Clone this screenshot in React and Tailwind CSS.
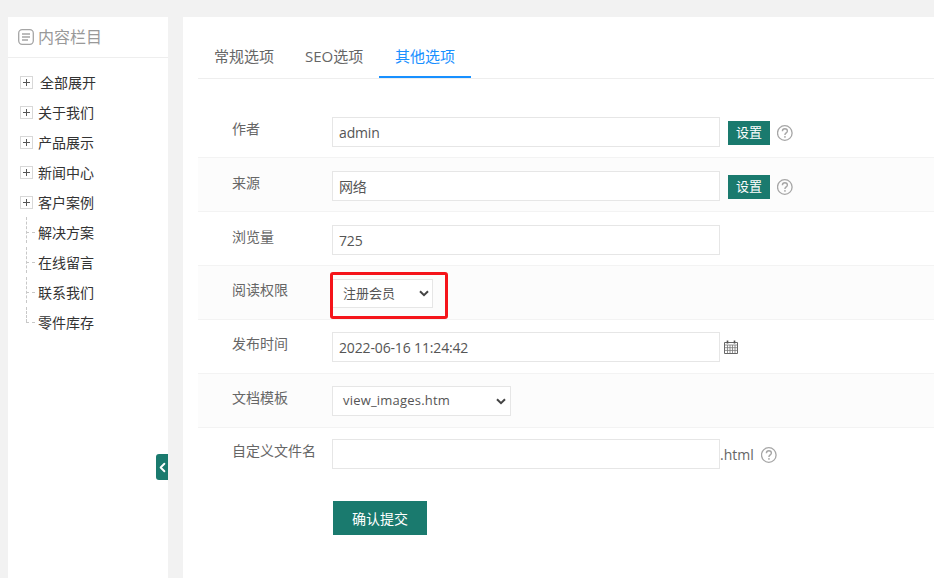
import { ChevronLeft } from 'lucide-react';

const Help = () => (
  <svg width="16" height="16" viewBox="0 0 16 16" fill="none" className="shrink-0">
    <circle cx="7.8" cy="8" r="7.3" stroke="#a6a6a6" strokeWidth="1.3" />
    <path d="M5.4 6.2C5.4 4.7 6.5 3.7 7.9 3.7s2.5 1 2.5 2.3c0 1.9-2.5 1.9-2.5 4" stroke="#a6a6a6" strokeWidth="1.4" />
    <rect x="7.2" y="11.1" width="1.5" height="1.6" fill="#a6a6a6" />
  </svg>
);

const Chevron = () => (
  <svg width="10" height="7" viewBox="0 0 10 7" fill="none" className="shrink-0">
    <path d="M1 1.2l4 4 4-4" stroke="#444444" strokeWidth="2" />
  </svg>
);

const Calendar = () => (
  <svg width="14" height="14" viewBox="0 0 14 14" fill="none">
    <path d="M.5 2.5h13v11H.5z" stroke="#666666" />
    <path d="M.5 5h13M.5 7.7h13M.5 10.4h13M3.5 5v8M6 5v8M8.5 5v8M11 5v8" stroke="#777777" strokeWidth=".8" />
    <path d="M3.5 .5v3M10.5 .5v3" stroke="#555555" strokeWidth="1.6" />
  </svg>
);

const Plus = () => (
  <span className="relative w-[13px] h-[13px] border border-[#d8d8d8] shrink-0 flex items-center justify-center">
    <span className="absolute w-[7px] h-px bg-[#555555]" />
    <span className="absolute h-[7px] w-px bg-[#555555]" />
  </span>
);

const TreeItem = ({ label, last }) => (
  <div className="h-[30px] flex items-center">
    <span className="relative w-[13px] h-[30px] shrink-0">
      <span className={`absolute left-[6px] top-0 border-l border-dashed border-[#c8c8c8] ${last ? 'h-[15px]' : 'h-[26px]'}`} />
      <span className="absolute left-[6px] top-[15px] w-[9px] border-t border-dashed border-[#c8c8c8]" />
    </span>
    <span className="ml-[5px]">{label}</span>
  </div>
);

const Row = ({ label, alt, children, labelTop = 'pt-[15px]', bodyTop = 'pt-[13px]' }) => (
  <div className={`h-[54px] flex border-b border-[#f3f3f3] ${alt ? 'bg-[#fcfcfc]' : ''}`}>
    <div className={`w-[134px] pl-[34px] shrink-0 text-[14px] leading-[20px] text-[#666666] whitespace-nowrap ${labelTop}`}>{label}</div>
    <div className={`flex items-start ${bodyTop}`}>{children}</div>
  </div>
);

const Field = ({ value }) => (
  <div className="w-[388px] h-[30px] border border-[#e6e6e6] bg-white px-[6px] flex items-center text-[14px] text-[#555555] tracking-[-0.15px]">{value}</div>
);

const SetBtn = () => (
  <>
    <button className="ml-[8px] mt-[4px] w-[42px] h-[24px] bg-[#1a7a6e] text-white text-[13px] flex items-center justify-center">设置</button>
    <span className="ml-[7px] mt-[8px]"><Help /></span>
  </>
);

export default function App() {
  const open = ['关于我们', '产品展示', '新闻中心', '客户案例'];
  const leaf = ['解决方案', '在线留言', '联系我们'];

  return (
    <div
      className="w-[934px] h-[578px] overflow-hidden bg-[#f2f2f2] flex pt-[17px] pl-[8px] gap-[15px] text-[14px]"
      style={{ fontFamily: '"Open Sans", "Noto Sans CJK SC", sans-serif' }}
    >
      <aside className="relative w-[160px] h-[561px] bg-white shrink-0">
        <div className="h-[41px] border-b border-[#eeeeee] flex items-center pl-[10px] gap-[4px] text-[16px] text-[#999999]">
          <svg width="16" height="16" viewBox="0 0 16 16" fill="none">
            <rect x=".7" y=".7" width="14.6" height="14.6" rx="3.5" stroke="#a5a5a5" strokeWidth="1.3" />
            <path d="M4 5h8M4 8h8M4 11h6" stroke="#a5a5a5" strokeWidth="1.4" />
          </svg>
          <span>内容栏目</span>
        </div>
        <div className="pt-[9px] pl-[12px] text-[#333333] text-[14px]">
          <div className="h-[30px] flex items-center">
            <Plus />
            <span className="ml-[7px]">全部展开</span>
          </div>
          {open.map((t) => (
            <div key={t} className="h-[30px] flex items-center">
              <Plus />
              <span className="ml-[5px]">{t}</span>
            </div>
          ))}
          {leaf.map((t) => <TreeItem key={t} label={t} />)}
          <TreeItem label="零件库存" last />
        </div>
        <div className="absolute right-0 top-[437px] w-[12px] h-[26px] bg-[#1a7a6e] rounded-l-[3px] flex items-center justify-center">
          <ChevronLeft size={15} strokeWidth={3} color="#ffffff" className="shrink-0" />
        </div>
      </aside>

      <main className="flex-1 bg-white h-[561px] pl-[15px]">
        <div className="h-[62px] border-b border-[#eeeeee] flex items-end text-[15px] text-[#666666]">
          <div className="h-[62px] pt-[30px] w-[91px] pl-[16px] leading-[20px]">常规选项</div>
          <div className="h-[62px] pt-[30px] w-[90px] pl-[16px] leading-[20px]">SEO选项</div>
          <div className="h-[62px] pt-[30px] w-[92px] text-center leading-[20px] text-[#1890ff] border-b-2 border-[#1890ff]">其他选项</div>
        </div>
        <div className="pt-[25px]">
          <Row label="作者">
            <Field value="admin" /><SetBtn />
          </Row>
          <Row label="来源" alt>
            <Field value="网络" /><SetBtn />
          </Row>
          <Row label="浏览量">
            <Field value="725" />
          </Row>
          <Row label="阅读权限" alt labelTop="pt-[14px]">
            <div className="relative">
              <div className="w-[101px] h-[29px] border border-[#e6e6e6] bg-white pl-[10px] pr-[3px] flex items-center justify-between text-[13px] text-[#555555]">
                注册会员<Chevron />
              </div>
              <div className="absolute -left-[2px] -top-[7px] w-[118px] h-[47px] border-[3px] border-[#f5141a] rounded-[3px]" />
            </div>
          </Row>
          <Row label="发布时间" labelTop="pt-[14px]" bodyTop="pt-[12px]">
            <Field value="2022-06-16 11:24:42" />
            <span className="ml-[4px] mt-[8px]"><Calendar /></span>
          </Row>
          <Row label="文档模板" alt labelTop="pt-[14px]" bodyTop="pt-[12px]">
            <div className="w-[179px] h-[30px] border border-[#e6e6e6] bg-white pl-[10px] pr-[4px] flex items-center justify-between text-[13px] tracking-[0.2px] text-[#555555]">
              view_images.htm<Chevron />
            </div>
          </Row>
          <div className="flex pt-[11px]">
            <div className="w-[134px] pl-[34px] shrink-0 pt-[2px] leading-[20px] text-[#666666] whitespace-nowrap">自定义文件名</div>
            <div className="flex items-start">
              <Field value="" />
              <span className="mt-[5px] text-[#666666]">.html</span>
              <span className="ml-[7px] mt-[8px]"><Help /></span>
            </div>
          </div>
          <button className="ml-[135px] mt-[32px] w-[94px] h-[34px] bg-[#1a7a6e] text-white text-[14px] flex items-center justify-center">确认提交</button>
        </div>
      </main>
    </div>
  );
}
